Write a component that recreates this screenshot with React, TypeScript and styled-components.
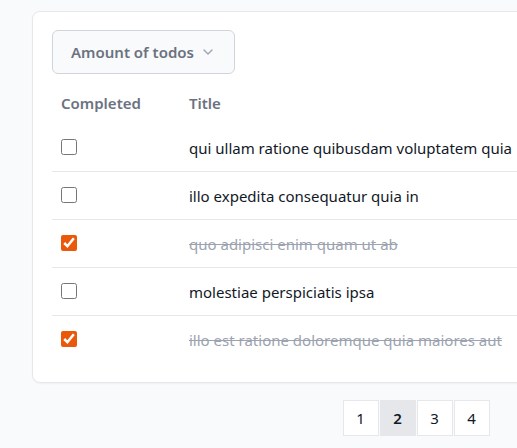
import styled, { createGlobalStyle } from "styled-components";
import { ChevronDown } from "lucide-react";

const GlobalStyle = createGlobalStyle`
  html, body {
    margin: 0;
    padding: 0;
    overflow: hidden;
    background-color: #f9fafc;
    font-family: "Noto Sans", "Open Sans", sans-serif;
  }
`;

const Page = styled.div`
  width: 768px;
  padding: 11px 0 0 32px;
  display: flex;
  flex-direction: column;
  gap: 17px;
`;

const Card = styled.div`
  background-color: #ffffff;
  border: 1px solid #e5e7eb;
  border-radius: 8px;
  box-shadow: 0 1px 2px rgba(0, 0, 0, 0.04);
  padding: 18px 19px 19px;
  display: flex;
  flex-direction: column;
  gap: 13px;
`;

const DropdownButton = styled.button`
  align-self: flex-start;
  height: 44px;
  padding: 0 18px;
  display: flex;
  align-items: center;
  gap: 6px;
  background-color: #f9fafb;
  border: 1px solid #d1d5db;
  border-radius: 6px;
  font-family: inherit;
  font-size: 15px;
  font-weight: 600;
  color: #6b7280;
`;

const Table = styled.table`
  width: 100%;
  border-collapse: collapse;
`;

const HeadCell = styled.th<{ $w?: string }>`
  text-align: left;
  padding: 0 9px 5px;
  height: 37px;
  box-sizing: border-box;
  font-size: 15px;
  font-weight: 600;
  color: #6b7280;
  width: ${(p) => p.$w || "auto"};
`;

const Row = styled.tr`
  & + & td {
    border-top: 1px solid #e5e7eb;
  }
`;

const Cell = styled.td`
  height: 47px;
  padding: 0 9px;
  font-size: 15px;
  white-space: nowrap;
`;

const Check = styled.input`
  width: 16px;
  height: 16px;
  margin: 3px 0 0;
  accent-color: #ea580c;
`;

const TodoTitle = styled.span<{ $done: boolean }>`
  color: ${(p) => (p.$done ? "#9ca3af" : "#111827")};
  text-decoration: ${(p) => (p.$done ? "line-through" : "none")};
`;

const Pager = styled.div`
  display: flex;
  justify-content: center;
  gap: 1px;
`;

const PageButton = styled.button<{ $active?: boolean }>`
  width: 36px;
  height: 36px;
  border: 1px solid #e5e7eb;
  background-color: ${(p) => (p.$active ? "#e5e7eb" : "#ffffff")};
  font-family: inherit;
  font-size: 15px;
  font-weight: ${(p) => (p.$active ? 600 : 400)};
  color: #111827;
  padding: 0;
`;

const todos = [
  { title: "qui ullam ratione quibusdam voluptatem quia", done: false },
  { title: "illo expedita consequatur quia in", done: false },
  { title: "quo adipisci enim quam ut ab", done: true },
  { title: "molestiae perspiciatis ipsa", done: false },
  { title: "illo est ratione doloremque quia maiores aut", done: true },
];

const App = () => {
  return (
    <>
      <GlobalStyle />
      <Page>
        <Card>
          <DropdownButton>
            Amount of todos
            <ChevronDown size={16} strokeWidth={2} color="#9ca3af" />
          </DropdownButton>
          <Table>
            <thead>
              <tr>
                <HeadCell $w="128px">Completed</HeadCell>
                <HeadCell>Title</HeadCell>
              </tr>
            </thead>
            <tbody>
              {todos.map((todo, i) => (
                <Row key={i}>
                  <Cell>
                    <Check type="checkbox" checked={todo.done} readOnly />
                  </Cell>
                  <Cell>
                    <TodoTitle $done={todo.done}>{todo.title}</TodoTitle>
                  </Cell>
                </Row>
              ))}
            </tbody>
          </Table>
        </Card>
        <Pager>
          {[1, 2, 3, 4].map((n) => (
            <PageButton key={n} $active={n === 2}>
              {n}
            </PageButton>
          ))}
        </Pager>
      </Page>
    </>
  );
};

export default App;
